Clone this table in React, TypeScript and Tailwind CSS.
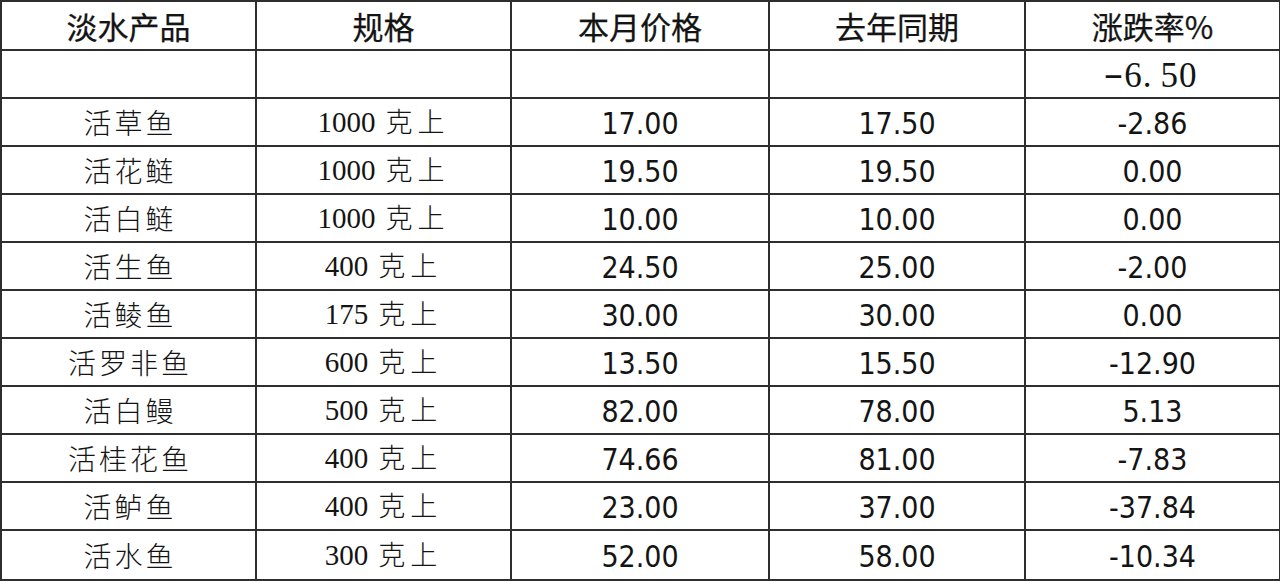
import React from "react";

const rows: [string, string, string, string, string][] = [
  ["活草鱼", "1000", "17.00", "17.50", "-2.86"],
  ["活花鲢", "1000", "19.50", "19.50", "0.00"],
  ["活白鲢", "1000", "10.00", "10.00", "0.00"],
  ["活生鱼", "400", "24.50", "25.00", "-2.00"],
  ["活鲮鱼", "175", "30.00", "30.00", "0.00"],
  ["活罗非鱼", "600", "13.50", "15.50", "-12.90"],
  ["活白鳗", "500", "82.00", "78.00", "5.13"],
  ["活桂花鱼", "400", "74.66", "81.00", "-7.83"],
  ["活鲈鱼", "400", "23.00", "37.00", "-37.84"],
  ["活水鱼", "300", "52.00", "58.00", "-10.34"],
];

const headers = ["淡水产品", "规格", "本月价格", "去年同期", "涨跌率%"];

const cell = "border-2 border-[#2e2e2e] text-center align-middle p-0";
const priceFont = {
  fontFamily: '"DejaVu Sans Condensed", "DejaVu Sans", sans-serif',
};

export default function App() {
  return (
    <div className="w-[1280px] h-[581px] bg-white overflow-hidden text-[#141414]">
      <table className="w-[1279px] border-collapse table-fixed">
        <colgroup>
          <col className="w-[255px]" />
          <col className="w-[255px]" />
          <col className="w-[258px]" />
          <col className="w-[256px]" />
          <col className="w-[255px]" />
        </colgroup>
        <thead>
          <tr className="h-[49px]">
            {headers.map((h) => (
              <th
                key={h}
                className={`${cell} font-normal text-[31px] leading-none font-['Noto_Sans_CJK_SC',sans-serif] [-webkit-text-stroke:0.25px_#141414]`}
              >
                {h}
              </th>
            ))}
          </tr>
        </thead>
        <tbody>
          <tr className="h-[48px]">
            <td className={cell}></td>
            <td className={cell}></td>
            <td className={cell}></td>
            <td className={cell}></td>
            <td className={`${cell} text-[35px] leading-none font-['Liberation_Serif',serif] tracking-[1px] pt-[2px]`}>
              <span className="inline-block scale-x-[1.7] -translate-y-[2px] mr-[4px]">-</span>6<span className="mr-[8px]">.</span>50
            </td>
          </tr>
          {rows.map((r, i) => (
            <tr key={r[0]} className={i === rows.length - 1 ? "h-[50px]" : "h-[48px]"}>
              <td className={`${cell} text-[28px] leading-none font-['Noto_Sans_CJK_SC',sans-serif] font-light tracking-[3px] pl-[3px]`}>
                {r[0]}
              </td>
              <td className={`${cell} leading-none`}>
                <span className="font-['Liberation_Serif',serif] text-[29px]">{r[1]}</span>
                <span className="font-['Noto_Sans_CJK_SC',sans-serif] font-light text-[27px] tracking-[5px] ml-[10px]">
                  克上
                </span>
              </td>
              <td className={`${cell} text-[30px] leading-none pt-[4px]`} style={priceFont}>
                {r[2]}
              </td>
              <td className={`${cell} text-[30px] leading-none pt-[4px]`} style={priceFont}>
                {r[3]}
              </td>
              <td className={`${cell} text-[30px] leading-none pt-[4px]`} style={priceFont}>
                {r[4]}
              </td>
            </tr>
          ))}
        </tbody>
      </table>
    </div>
  );
}
